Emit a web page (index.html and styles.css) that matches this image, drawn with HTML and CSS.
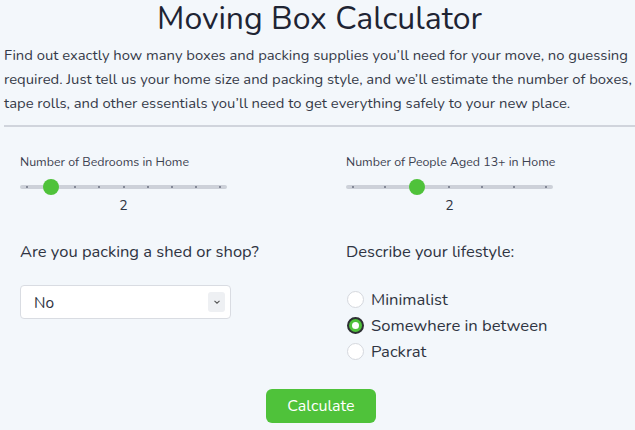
FILE: index.html
```html
<!DOCTYPE html>
<html lang="en">
<head>
<meta charset="utf-8">
<title>Moving Box Calculator</title>
<link rel="stylesheet" href="styles.css">
</head>
<body>
<div class="page">
  <h1 class="title">Moving Box Calculator</h1>
  <p class="intro">Find out exactly how many boxes and packing supplies you’ll need for your move, no guessing required. Just tell us your home size and packing style, and we’ll estimate the number of boxes, tape rolls, and other essentials you’ll need to get everything safely to your new place.</p>
  <hr class="divider">
  <div class="form">
    <div class="col">
      <div class="field-label">Number of Bedrooms in Home</div>
      <div class="slider">
        <div class="track">
          <span class="dot"></span><span class="dot"></span><span class="dot"></span><span class="dot"></span><span class="dot"></span><span class="dot"></span><span class="dot"></span><span class="dot"></span><span class="dot"></span>
        </div>
        <div class="thumb-rail"><span class="thumb" style="left: 12.5%"></span></div>
      </div>
      <div class="value">2</div>
      <div class="question">Are you packing a shed or shop?</div>
      <div class="select">
        <span class="select-text">No</span>
        <span class="chev"><svg width="8" height="6" viewBox="0 0 8 6"><path d="M1.5 1.8 L4 4.2 L6.5 1.8" fill="none" stroke="#555" stroke-width="1.1"/></svg></span>
      </div>
    </div>
    <div class="col">
      <div class="field-label">Number of People Aged 13+ in Home</div>
      <div class="slider">
        <div class="track">
          <span class="dot"></span><span class="dot"></span><span class="dot"></span><span class="dot"></span><span class="dot"></span><span class="dot"></span><span class="dot"></span>
        </div>
        <div class="thumb-rail"><span class="thumb" style="left: 33.333%"></span></div>
      </div>
      <div class="value">2</div>
      <div class="question">Describe your lifestyle:</div>
      <div class="radios">
        <label class="radio"><span class="circle"></span>Minimalist</label>
        <label class="radio"><span class="circle checked"></span>Somewhere in between</label>
        <label class="radio"><span class="circle"></span>Packrat</label>
      </div>
    </div>
  </div>
  <div class="actions">
    <button class="btn">Calculate</button>
  </div>
</div>
</body>
</html>
```
FILE: styles.css
```css
* { box-sizing: border-box; }
html, body { margin: 0; padding: 0; }
body {
  background: #f3f7fb;
  font-family: "Nunito", "Lato", "Noto Sans", sans-serif;
  color: #2f3442;
  width: 635px;
  height: 430px;
  overflow: hidden;
}
.page { padding: 0 0 0 4px; width: 660px; }
.title {
  margin: 1px 0 0 -25px;
  text-align: center;
  font-size: 32px;
  line-height: 36px;
  font-weight: 400;
  color: #1e2433;
}
.intro {
  margin: 6px 0 0;
  width: 634px;
  font-size: 14.8px;
  line-height: 24px;
  color: #353a48;
}
.divider {
  margin: 10px 0 0;
  border: 0;
  height: 2px;
  background: #d0d4dc;
}
.form {
  display: grid;
  grid-template-columns: 326px 1fr;
  padding: 0 0 0 16px;
  margin-top: 27px;
}
.field-label {
  font-size: 12.4px;
  line-height: 16px;
  color: #3c4150;
}
.slider {
  position: relative;
  width: 207px;
  height: 16px;
  margin-top: 9px;
  display: flex;
  align-items: center;
}
.track {
  width: 100%;
  height: 4px;
  border-radius: 2px;
  background: #cdd1d9;
  display: flex;
  justify-content: space-between;
  align-items: center;
  padding: 0 6px;
}
.dot {
  width: 2px;
  height: 2px;
  border-radius: 50%;
  background: #6b7080;
}
.thumb-rail {
  position: absolute;
  top: 0;
  bottom: 0;
  left: 7px;
  right: 7px;
}
.thumb {
  position: absolute;
  top: 0;
  width: 16px;
  height: 16px;
  margin-left: -8px;
  border-radius: 50%;
  background: #4fc23a;
}
.value {
  width: 207px;
  text-align: center;
  margin-top: 2px;
  font-size: 14px;
  line-height: 18px;
  color: #2f3442;
}
.question {
  margin-top: 26px;
  font-size: 16.5px;
  line-height: 22px;
  color: #2f3442;
}
.select {
  margin-top: 22px;
  width: 211px;
  height: 34px;
  background: #fff;
  border: 1px solid #d9dce2;
  border-radius: 4px;
  display: flex;
  align-items: center;
  justify-content: space-between;
  padding: 0 5px 0 13px;
}
.select-text { font-size: 15.5px; color: #2f3442; }
.chev {
  width: 17px;
  height: 20px;
  background: #eef0f3;
  border-radius: 3px;
  display: flex;
  align-items: center;
  justify-content: center;
}
.radios {
  margin-top: 23px;
  margin-left: 1px;
  display: flex;
  flex-direction: column;
}
.radio {
  display: flex;
  align-items: center;
  height: 26px;
  font-size: 16.6px;
  color: #2f3442;
}
.circle {
  width: 17px;
  height: 17px;
  border-radius: 50%;
  background: #fff;
  border: 1px solid #d5d8de;
  margin-right: 7px;
  display: flex;
  align-items: center;
  justify-content: center;
}
.circle.checked {
  background: #4fc23a;
  border: 2px solid #2d2f33;
}
.circle.checked::after {
  content: "";
  width: 7px;
  height: 7px;
  border-radius: 50%;
  background: #fff;
}
.actions {
  display: flex;
  justify-content: center;
  margin-top: 25px;
  width: 640px;
  padding-right: 6px;
}
.btn {
  width: 110px;
  height: 34px;
  border: 0;
  border-radius: 6px;
  background: #4fc23a;
  color: #fff;
  font-family: inherit;
  font-size: 16px;
}
```
